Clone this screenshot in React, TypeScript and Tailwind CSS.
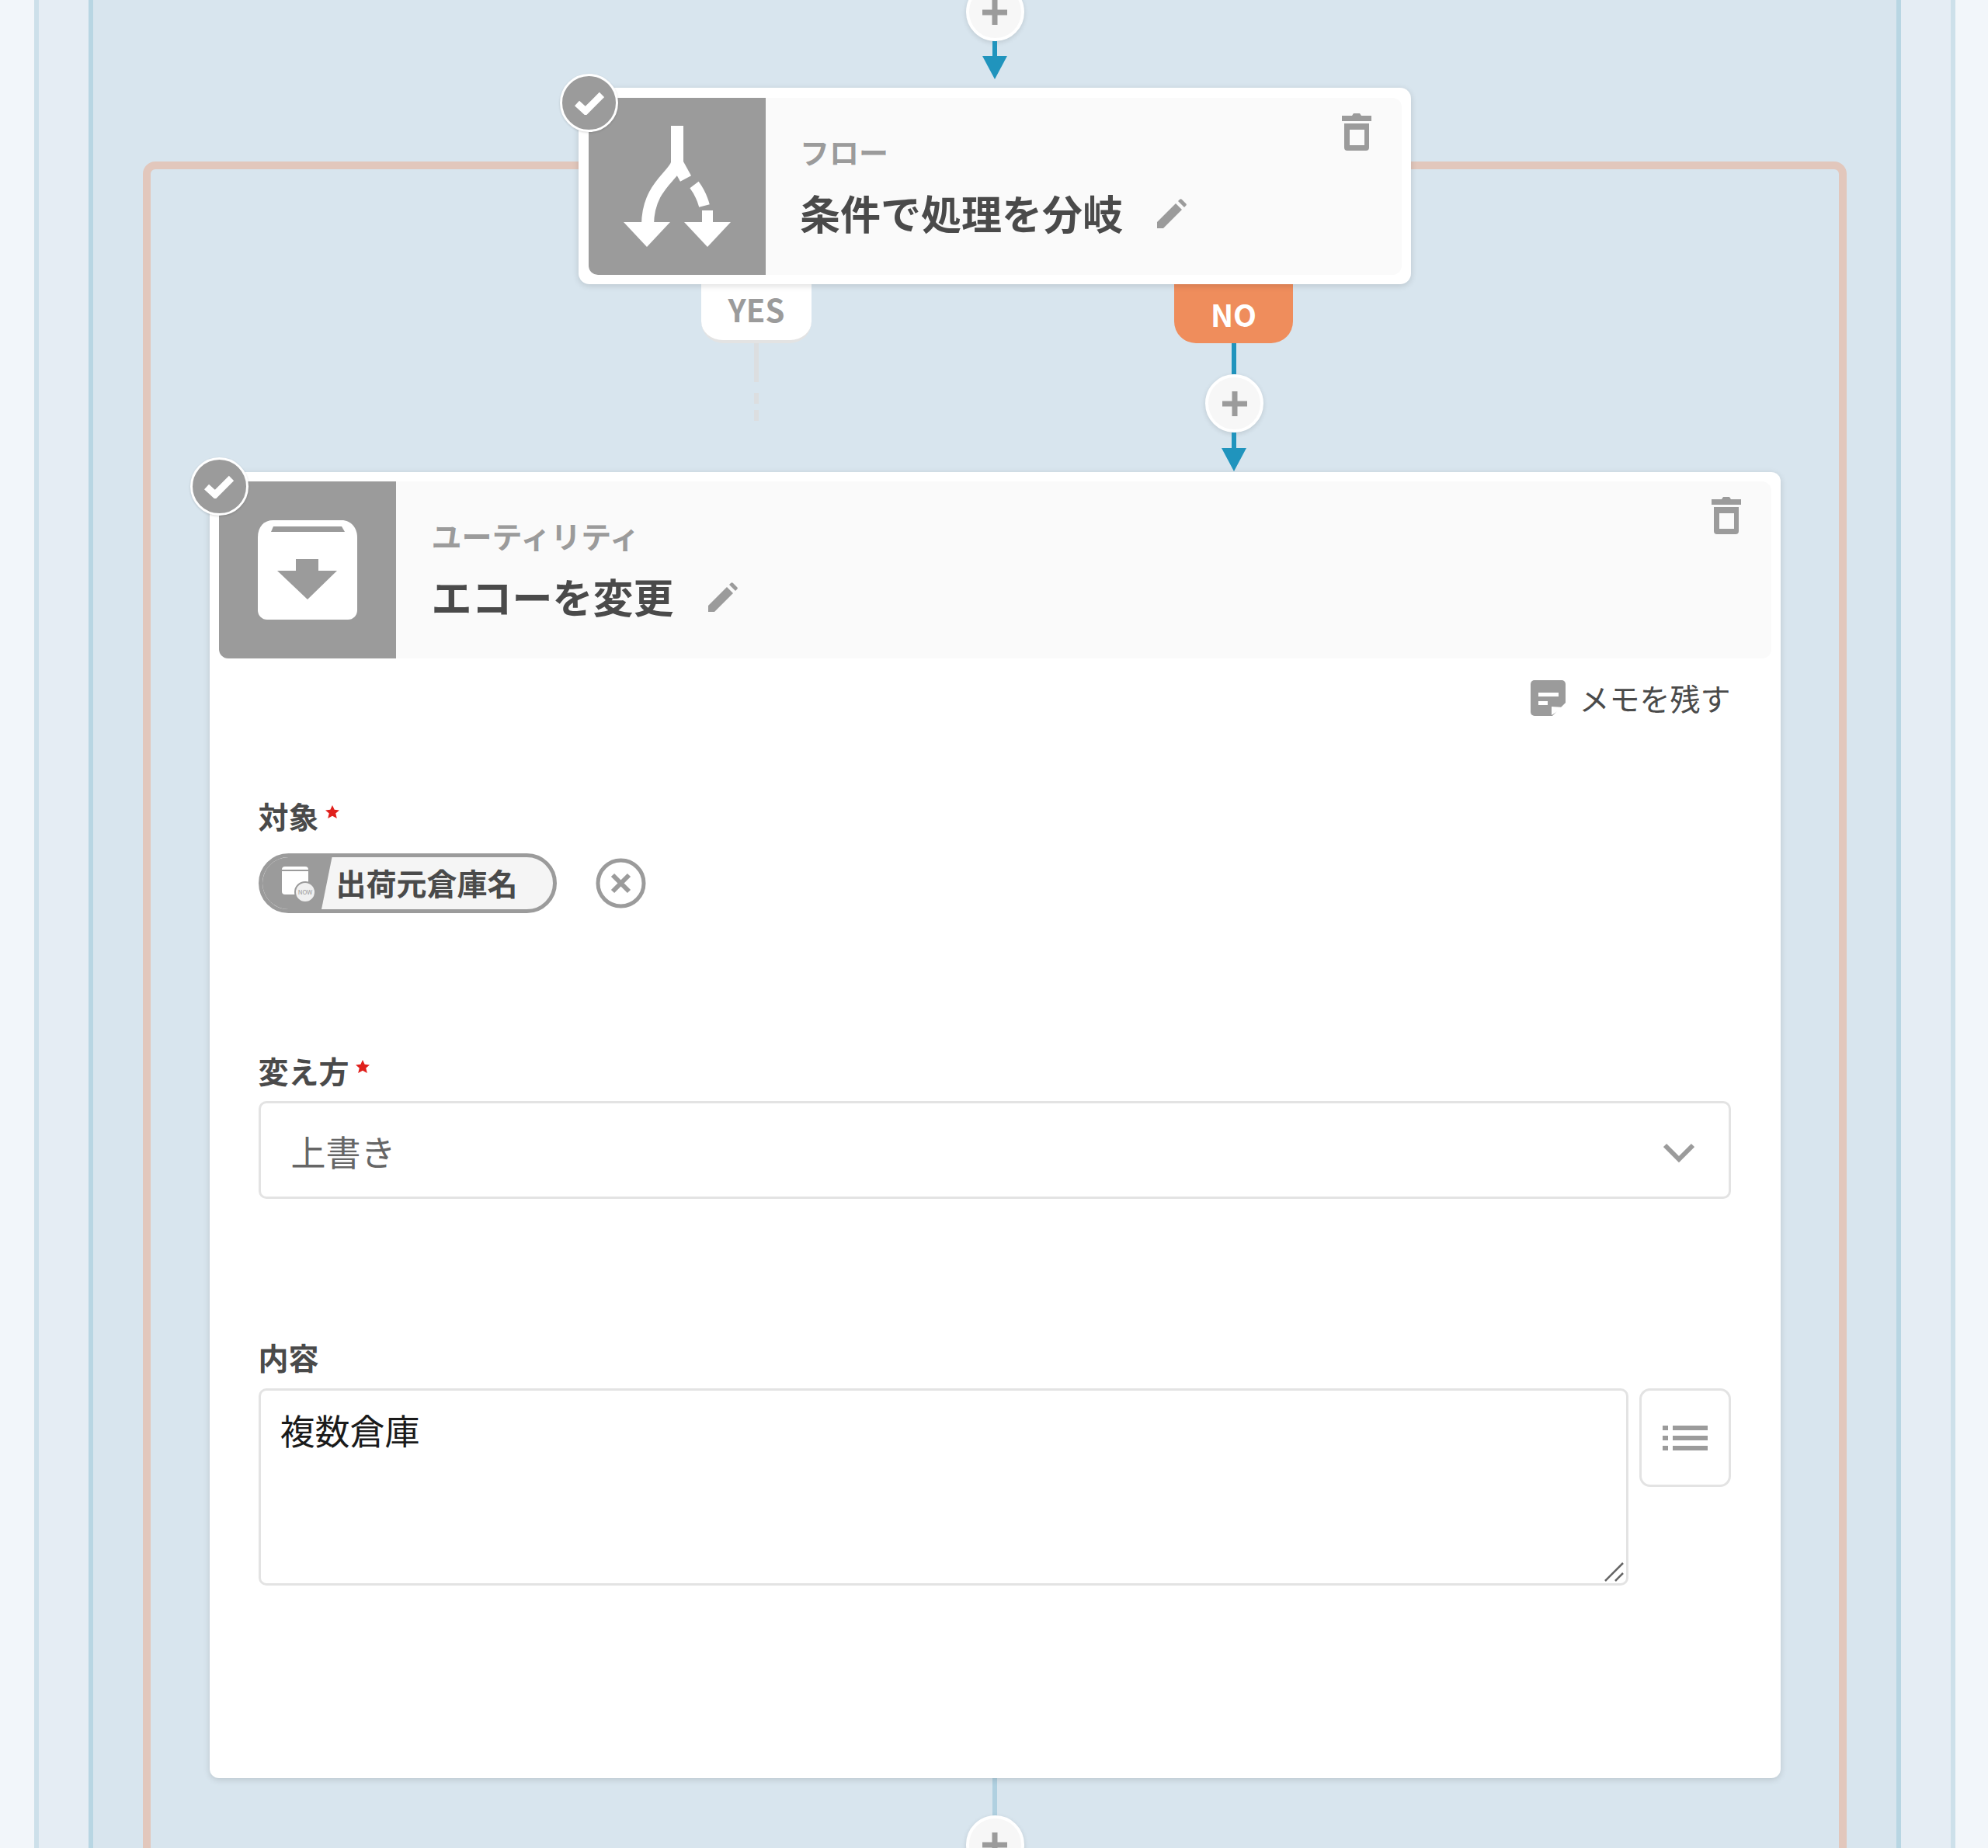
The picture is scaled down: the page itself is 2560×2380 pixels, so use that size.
const Plus = () => (
  <div className="w-[75px] h-[75px] rounded-full bg-[#f7f7f7] border-[4px] border-white shadow-[0_2px_6px_rgba(0,0,0,0.12)] flex items-center justify-center shrink-0">
    <svg width="34" height="34" viewBox="0 0 34 34">
      <path d="M13.500 1h7v12.500H33v7H20.500V33h-7V20.500H1v-7h12.500z" fill="#9b9b9b" />
    </svg>
  </div>
);

const Arrow = ({ line }: { line: number }) => (
  <svg width="32" height={line + 30} className="shrink-0">
    <rect x="13" y="0" width="6" height={line + 2} fill="#2094bd" />
    <polygon points={`0,${line} 32,${line} 16,${line + 30}`} fill="#2094bd" />
  </svg>
);

const Check = () => (
  <div className="absolute -left-[37px] -top-[31px] w-[75px] h-[75px] rounded-full bg-[#9b9b9b] border-[3px] border-white flex items-center justify-center shadow-[0_1px_3px_rgba(0,0,0,0.15)]">
    <svg width="38" height="30" viewBox="0 0 38 30">
      <path d="M3 15l11 10L35 4" fill="none" stroke="#fff" strokeWidth="9" />
    </svg>
  </div>
);

const Trash = () => (
  <svg width="38" height="48" viewBox="0 0 38 48">
    <path d="M0 3h13l2-3h8l2 3h13v7H0z" fill="#9b9b9b" />
    <path d="M3 13h32v31a4 4 0 0 1-4 4H7a4 4 0 0 1-4-4z M10 21v20h19V21z" fill="#9b9b9b" fillRule="evenodd" />
  </svg>
);

const Pencil = () => (
  <svg width="40" height="40" viewBox="0 0 40 40">
    <path d="M1 31L25 7l8 8L9 39H1z M28 4l2-2a2 2 0 0 1 3 0l5 5a2 2 0 0 1 0 3l-2 2z" fill="#9b9b9b" />
  </svg>
);

const ForkIcon = () => (
  <svg width="228" height="228" viewBox="0 0 228 228">
    <path d="M114 36v50" stroke="#fff" strokeWidth="16" fill="none" />
    <path d="M114 84c-3 16-38 30-38 80" stroke="#fff" strokeWidth="16" fill="none" />
    <path d="M114 84l11 20" stroke="#fff" strokeWidth="16" fill="none" />
    <path d="M136 112c6 8 10 16 13 27" stroke="#fff" strokeWidth="14" fill="none" />
    <path d="M153 145v18" stroke="#fff" strokeWidth="14" fill="none" />
    <polygon points="45,160 105,160 75,192" fill="#fff" />
    <polygon points="123,160 183,160 153,192" fill="#fff" />
  </svg>
);

const BoxIcon = () => (
  <svg width="128" height="128" viewBox="0 0 128 128">
    <path d="M20 0h88c12 0 20 10 20 22v94a12 12 0 0 1-12 12H12a12 12 0 0 1-12-12V22C0 8 8 0 20 0z" fill="#fff" />
    <polygon points="17,15 20,8 108,8 112,15" fill="#9b9b9b" />
    <polygon points="49,50 78,50 78,65 102,65 64,102 25,65 49,65" fill="#9b9b9b" />
  </svg>
);

const MemoIcon = () => (
  <svg width="45" height="46" viewBox="0 0 45 46">
    <path d="M5 0h35a5 5 0 0 1 5 5v24L28 46H5a5 5 0 0 1-5-5V5a5 5 0 0 1 5-5z" fill="#9b9b9b" />
    <rect x="10" y="16" width="26" height="5" fill="#fff" />
    <rect x="10" y="27" width="12" height="5" fill="#fff" />
    <polygon points="27,34 43,35 27,45" fill="#fff" />
  </svg>
);

const Required = ({ children }: { children: string }) => (
  <div className="flex h-[50px] items-center">
    <span className="text-[39px] leading-[50px] font-bold text-[#4a4a4a]">{children}</span>
    <svg width="18" height="17" viewBox="0 0 17 16" className="ml-[8px] -mt-[10px]">
      <polygon points="8.5,0 11,5.5 17,6 12.5,10 14,16 8.5,13 3,16 4.500,10 0,6 6,5.500" fill="#e0201c" />
    </svg>
  </div>
);

export default function App() {
  return (
    <div className="w-[2560px] h-[2380px] overflow-hidden bg-[#f2f6fa] pl-[44px] pr-[42px] font-['Noto_Sans_CJK_JP','Noto_Sans',sans-serif]">
      <div className="h-full border-x-[6px] border-[#cde0ea] bg-[#e5edf4] px-[64px]">
        <div className="h-full border-x-[6px] border-[#b8d6e3] bg-[#d8e5ee] px-[64px] flex flex-col items-center">
          <div className="-mt-[22px] flex flex-col items-center">
            <Plus />
            <Arrow line={19} />
          </div>

          <div className="mt-[106px] w-full h-[2400px] rounded-[16px] border-[10px] border-[#e2c7bc] flex flex-col items-center">
            {/* flow block sits on the frame's top edge */}
            <div className="relative z-10 -mt-[105px] w-[1072px] h-[253px] shrink-0 bg-white rounded-[14px] pl-[13px] pr-[12px] pt-[13px] shadow-[0_2px_8px_rgba(0,0,0,0.14)]">
              <div className="relative flex h-[228px] bg-[#fafafa] rounded-[12px]">
                <Check />
                <div className="w-[228px] h-[228px] bg-[#9b9b9b] rounded-bl-[12px] shrink-0">
                  <ForkIcon />
                </div>
                <div className="pl-[44px] pt-[46px] flex-1">
                  <div className="text-[38px] leading-[46px] font-bold text-[#9b9b9b]">フロー</div>
                  <div className="mt-[21px] flex items-center">
                    <span className="text-[52px] leading-[70px] font-bold text-[#4a4a4a]">条件で処理を分岐</span>
                    <span className="ml-[43px] mt-[2px]"><Pencil /></span>
                  </div>
                </div>
                <div className="pt-[20px] pr-[39px]"><Trash /></div>
              </div>
            </div>

            <div className="w-[1072px] h-[242px] shrink-0 flex">
              <div className="ml-[158px] w-[142px] flex flex-col items-center">
                <div className="w-full h-[76px] pb-[8px] bg-white rounded-b-[28px] border-b-[4px] border-[#e3e3e3] flex items-center justify-center text-[40px] font-bold text-[#9b9b9b]">
                  YES
                </div>
                <svg width="6" height="108">
                  <rect x="0" y="0" width="6" height="50" fill="#dcdee0" />
                  <rect x="0" y="64" width="6" height="14" fill="#dcdee0" />
                  <rect x="0" y="86" width="6" height="14" fill="#dcdee0" />
                </svg>
              </div>
              <div className="ml-[467px] w-[153px] flex flex-col items-center">
                <div className="w-full h-[76px] bg-[#ef8d5c] rounded-b-[28px] flex items-center justify-center text-[39px] font-bold text-white shrink-0">
                  NO
                </div>
                <div className="w-[6px] h-[40px] bg-[#2094bd] shrink-0" />
                <div className="ml-[2px]"><Plus /></div>
                <Arrow line={20} />
              </div>
            </div>

            <div className="relative w-[2023px] h-[1682px] shrink-0 bg-white rounded-[12px] p-[12px] shadow-[0_2px_8px_rgba(0,0,0,0.14)]">
              <div className="relative flex h-[228px] bg-[#fafafa] rounded-[12px]">
                <Check />
                <div className="w-[228px] h-[228px] bg-[#9b9b9b] rounded-bl-[12px] shrink-0 flex items-center justify-center">
                  <BoxIcon />
                </div>
                <div className="pl-[46px] pt-[46px] flex-1">
                  <div className="text-[39px] leading-[46px] font-bold text-[#9b9b9b]">ユーティリティ</div>
                  <div className="mt-[21px] flex items-center">
                    <span className="text-[52px] leading-[70px] font-bold text-[#4a4a4a]">エコーを変更</span>
                    <span className="ml-[43px] mt-[2px]"><Pencil /></span>
                  </div>
                </div>
                <div className="pt-[20px] pr-[39px]"><Trash /></div>
              </div>

              <div className="pl-[51px] pr-[52px]">
                <div className="mt-[28px] h-[45px] flex items-center justify-end">
                  <MemoIcon />
                  <span className="ml-[17px] text-[39px] leading-[45px] text-[#4a4a4a]">メモを残す</span>
                </div>

                <div className="mt-[104px]"><Required>対象</Required></div>
                <div className="mt-[24px] flex items-center">
                  <div className="relative w-[384px] h-[77px] rounded-full border-[5px] border-[#9b9b9b] bg-[#f5f5f5] flex items-center overflow-hidden">
                    <div className="absolute left-0 top-0 h-full w-[90px] bg-[#9b9b9b] [clip-path:polygon(0_0,100%_0,85%_100%,0_100%)]" />
                    <svg width="48" height="48" viewBox="0 0 48 48" className="absolute left-[23px] top-[10px]">
                      <rect x="2" y="2" width="34" height="36" rx="4" fill="#fff" />
                      <rect x="2" y="6" width="34" height="2" fill="#9b9b9b" />
                      <circle cx="32" cy="35" r="13" fill="#f0f0f0" stroke="#9b9b9b" strokeWidth="2" />
                      <text x="32" y="38" textAnchor="middle" fontSize="8" fill="#9b9b9b">NOW</text>
                    </svg>
                    <span className="relative ml-[95px] -mt-[3px] text-[39px] leading-[50px] font-bold text-[#4a4a4a] whitespace-nowrap">出荷元倉庫名</span>
                  </div>
                  <svg width="65" height="65" viewBox="0 0 65 65" className="ml-[50px]">
                    <circle cx="32.500" cy="32.500" r="29.500" fill="none" stroke="#9b9b9b" strokeWidth="5" />
                    <path d="M22 22l21 21M43 22L22 43" stroke="#9b9b9b" strokeWidth="6" fill="none" />
                  </svg>
                </div>

                <div className="mt-[177px]"><Required>変え方</Required></div>
                <div className="mt-[15px] h-[126px] border-[3px] border-[#e3e3e3] rounded-[10px] flex items-center justify-between pl-[39px] pr-[44px]">
                  <span className="text-[45px] leading-[60px] mt-[4px] text-[#666666]">上書き</span>
                  <svg width="40" height="26" viewBox="0 0 40 26" className="mt-[5px]">
                    <path d="M2 4l18 18L38 4" fill="none" stroke="#9b9b9b" strokeWidth="6" />
                  </svg>
                </div>

                <div className="mt-[178px] text-[39px] leading-[50px] font-bold text-[#4a4a4a]">内容</div>
                <div className="mt-[16px] flex gap-[14px] items-start">
                  <div className="relative flex-1 h-[254px]">
                    <textarea
                      readOnly
                      value="複数倉庫"
                      className="block w-full h-full resize-none border-[3px] border-[#e3e3e3] rounded-[10px] pl-[25px] pt-[21px] text-[45px] leading-[60px] text-[#1a1a1a] bg-white outline-none"
                    />
                    <svg width="28" height="28" viewBox="0 0 28 28" className="absolute right-[4px] bottom-[4px]">
                      <path d="M2 26L25 3M15 26L25 16" stroke="#666" strokeWidth="2.500" fill="none" />
                    </svg>
                  </div>
                  <div className="w-[118px] h-[127px] border-[3px] border-[#e3e3e3] rounded-[14px] flex items-center justify-center">
                    <svg width="58" height="32" viewBox="0 0 58 32">
                      <rect x="0" y="0" width="7" height="6" fill="#9b9b9b" />
                      <rect x="13" y="0" width="45" height="6" fill="#9b9b9b" />
                      <rect x="0" y="13" width="7" height="6" fill="#9b9b9b" />
                      <rect x="13" y="13" width="45" height="6" fill="#9b9b9b" />
                      <rect x="0" y="26" width="7" height="6" fill="#9b9b9b" />
                      <rect x="13" y="26" width="45" height="6" fill="#9b9b9b" />
                    </svg>
                  </div>
                </div>
              </div>
            </div>

            <div className="w-[6px] h-[48px] bg-[#b0d0e0] shrink-0" />
            <Plus />
          </div>
        </div>
      </div>
    </div>
  );
}
